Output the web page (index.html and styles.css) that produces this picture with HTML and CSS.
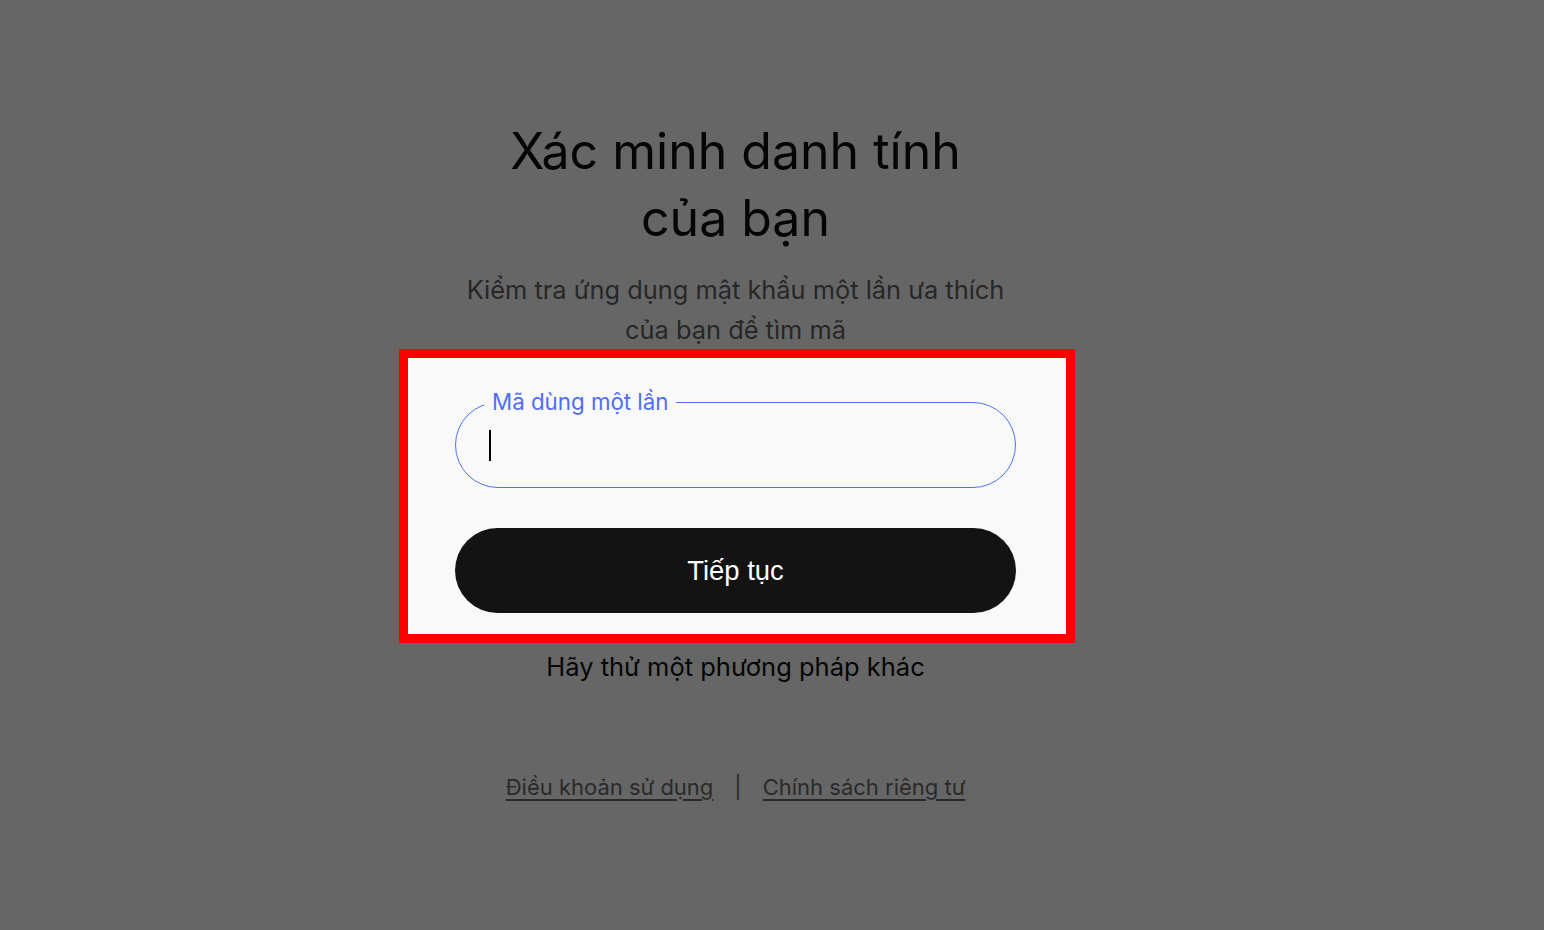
FILE: index.html
```html
<!DOCTYPE html>
<html lang="vi">
<head>
<meta charset="utf-8">
<title>Xác minh danh tính của bạn</title>
<link rel="stylesheet" href="styles.css">
</head>
<body>
<main class="page">
  <h1 class="title">Xác minh danh tính<br>của bạn</h1>
  <p class="subtitle">Kiểm tra ứng dụng mật khẩu một lần ưa thích<br>của bạn để tìm mã</p>
  <section class="highlight">
    <div class="field">
      <span class="field-label">Mã dùng một lần</span>
      <span class="caret"></span>
    </div>
    <button class="btn" type="button">Tiếp tục</button>
  </section>
  <a class="alt" href="#">Hãy thử một phương pháp khác</a>
  <footer class="footer">
    <a class="footer-link" href="#">Điều khoản sử dụng</a>
    <span class="sep">|</span>
    <a class="footer-link" href="#">Chính sách riêng tư</a>
  </footer>
</main>
</body>
</html>
```

FILE: styles.css
```css
html, body {
  margin: 0;
  padding: 0;
  background: #666666;
  height: 100%;
}
body {
  font-family: Inter, "Noto Sans", sans-serif;
  color: #050505;
}
.page {
  display: flex;
  flex-direction: column;
  align-items: center;
  padding: 118px 73px 0 0;
}
.title {
  margin: 0;
  font-size: 50px;
  line-height: 67px;
  font-weight: 400;
  text-align: center;
  color: #050505;
}
.subtitle {
  margin: 18px 0 0;
  font-size: 25.4px;
  line-height: 40px;
  text-align: center;
  color: #272727;
}
.highlight {
  width: 561px;
  border: 9px solid #ff0000;
  background: #f9f9f9;
  padding: 44px 50px 21px 47px;
  margin: -1px 0 0 3px;
  box-sizing: content-box;
  display: flex;
  flex-direction: column;
  gap: 40px;
}
.field {
  position: relative;
  height: 86px;
  box-sizing: border-box;
  border: 1px solid #4f6ff2;
  border-radius: 43px;
  display: flex;
  align-items: center;
  padding-left: 33px;
}
.field-label {
  position: absolute;
  left: 28px;
  top: -14px;
  padding: 0 8px;
  background: #f9f9f9;
  color: #4f6ef7;
  font-size: 22.3px;
  line-height: 26px;
}
.caret {
  display: block;
  width: 2px;
  height: 31px;
  background: #000;
}
.btn {
  height: 85px;
  border: 0;
  border-radius: 43px;
  background: #131313;
  color: #ffffff;
  font-family: "Liberation Sans", Arial, sans-serif;
  font-size: 27.4px;
  padding-top: 1px;
  cursor: pointer;
}
.alt {
  margin-top: 6px;
  font-size: 25.5px;
  line-height: 36px;
  color: #050505;
  text-decoration: none;
}
.footer {
  margin-top: 87px;
  display: flex;
  align-items: center;
  gap: 21px;
  font-size: 22px;
  line-height: 30px;
  color: #2a2a2a;
}
.footer-link {
  color: #2a2a2a;
  text-decoration: underline;
  text-underline-offset: 4px;
}
.sep {
  color: #2a2a2a;
}
```
